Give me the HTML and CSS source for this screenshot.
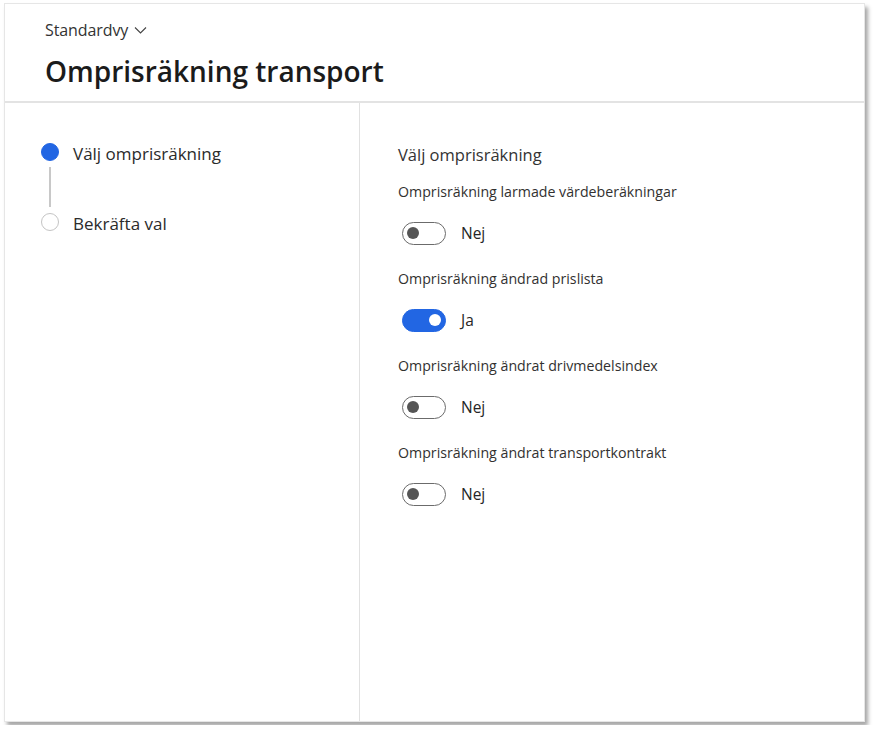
FILE: index.html
```html
<!DOCTYPE html>
<html lang="sv">
<head>
    <meta charset="UTF-8">
    <title>Omprisräkning transport</title>
    <link rel="stylesheet" href="styles.css">
</head>
<body>

<section class="panel">
    <header class="panel_head">
        <div class="view_pick">
            <span>Standardvy</span>
            <svg width="13" height="8" viewBox="0 0 13 8"><path d="M1 1.5 L6.5 7 L12 1.5" fill="none" stroke="#444" stroke-width="1.1"/></svg>
        </div>
        <h1 class="panel_title">Omprisräkning transport</h1>
    </header>

    <div class="panel_body">
        <nav class="steps">
            <div class="step step-active">
                <span class="step_dot"></span>
                <span class="step_text">Välj omprisräkning</span>
            </div>
            <div class="step_line"></div>
            <div class="step">
                <span class="step_dot"></span>
                <span class="step_text">Bekräfta val</span>
            </div>
        </nav>

        <div class="content">
            <h2 class="content_title">Välj omprisräkning</h2>

            <div class="field">
                <div class="field_label">Omprisräkning larmade värdeberäkningar</div>
                <div class="toggle_row">
                    <span class="toggle"></span>
                    <span class="toggle_text">Nej</span>
                </div>
            </div>

            <div class="field">
                <div class="field_label">Omprisräkning ändrad prislista</div>
                <div class="toggle_row">
                    <span class="toggle toggle-on"></span>
                    <span class="toggle_text">Ja</span>
                </div>
            </div>

            <div class="field">
                <div class="field_label">Omprisräkning ändrat drivmedelsindex</div>
                <div class="toggle_row">
                    <span class="toggle"></span>
                    <span class="toggle_text">Nej</span>
                </div>
            </div>

            <div class="field">
                <div class="field_label">Omprisräkning ändrat transportkontrakt</div>
                <div class="toggle_row">
                    <span class="toggle"></span>
                    <span class="toggle_text">Nej</span>
                </div>
            </div>
        </div>
    </div>
</section>

</body>
</html>
```

FILE: styles.css
```css
body {
    margin: 0;
    padding: 3px 4px;
    background: #fff;
    font-family: "Open Sans", "Noto Sans", sans-serif;
    color: #262626;
}

.panel {
    box-sizing: border-box;
    width: 861px;
    height: 719px;
    border: 1px solid #e6e6e6;
    background: #fff;
    box-shadow: 3px 4px 4px rgba(0, 0, 0, .35);
    display: flex;
    flex-direction: column;
}

.panel_head {
    height: 97px;
    padding-left: 40px;
    border-bottom: 2px solid #e3e3e3;
}

.view_pick {
    display: flex;
    align-items: center;
    gap: 6px;
    margin-top: 15px;
    font-size: 16px;
    line-height: 22px;
    color: #333;
    letter-spacing: -.1px;
}

.panel_title {
    margin: 12px 0 0;
    font-size: 28px;
    line-height: 36px;
    font-weight: 600;
    color: #1b1b1b;
}

.panel_body {
    flex: 1;
    display: flex;
}

.steps {
    width: 318px;
    padding: 40px 0 0 36px;
    border-right: 1px solid #e1e1e1;
}

.step {
    display: flex;
    align-items: center;
    gap: 14px;
    height: 18px;
}

.step_dot {
    box-sizing: border-box;
    width: 18px;
    height: 18px;
    border-radius: 50%;
    border: 1.5px solid #c4c4c4;
}

.step-active .step_dot {
    background: #2266e3;
    border-color: #2266e3;
}

.step_text {
    font-size: 17px;
    color: #2b2b2b;
    padding-top: 2px;
}

.step_line {
    width: 2px;
    height: 40px;
    margin: 6px 0 6px 8px;
    background: #c8c8c8;
}

.content {
    padding: 41px 0 0 38px;
}

.content_title {
    margin: 0 0 16px;
    font-size: 16.5px;
    line-height: 22px;
    font-weight: 400;
    color: #333;
}

.field {
    margin-bottom: 24px;
}

.field_label {
    font-size: 14.2px;
    line-height: 20px;
    color: #323130;
    margin-bottom: 19px;
}

.toggle_row {
    display: flex;
    align-items: center;
    gap: 15px;
    height: 24px;
    padding-left: 4px;
}

.toggle {
    box-sizing: border-box;
    position: relative;
    width: 44px;
    height: 23px;
    border-radius: 12px;
    border: 1.5px solid #6b6b6b;
}

.toggle::after {
    content: "";
    position: absolute;
    top: 4px;
    left: 4px;
    width: 12px;
    height: 12px;
    border-radius: 50%;
    background: #555;
}

.toggle-on {
    background: #2266e3;
    border-color: #2266e3;
}

.toggle-on::after {
    left: auto;
    right: 4px;
    background: #fff;
}

.toggle_text {
    font-size: 15.5px;
    color: #262626;
}
```
